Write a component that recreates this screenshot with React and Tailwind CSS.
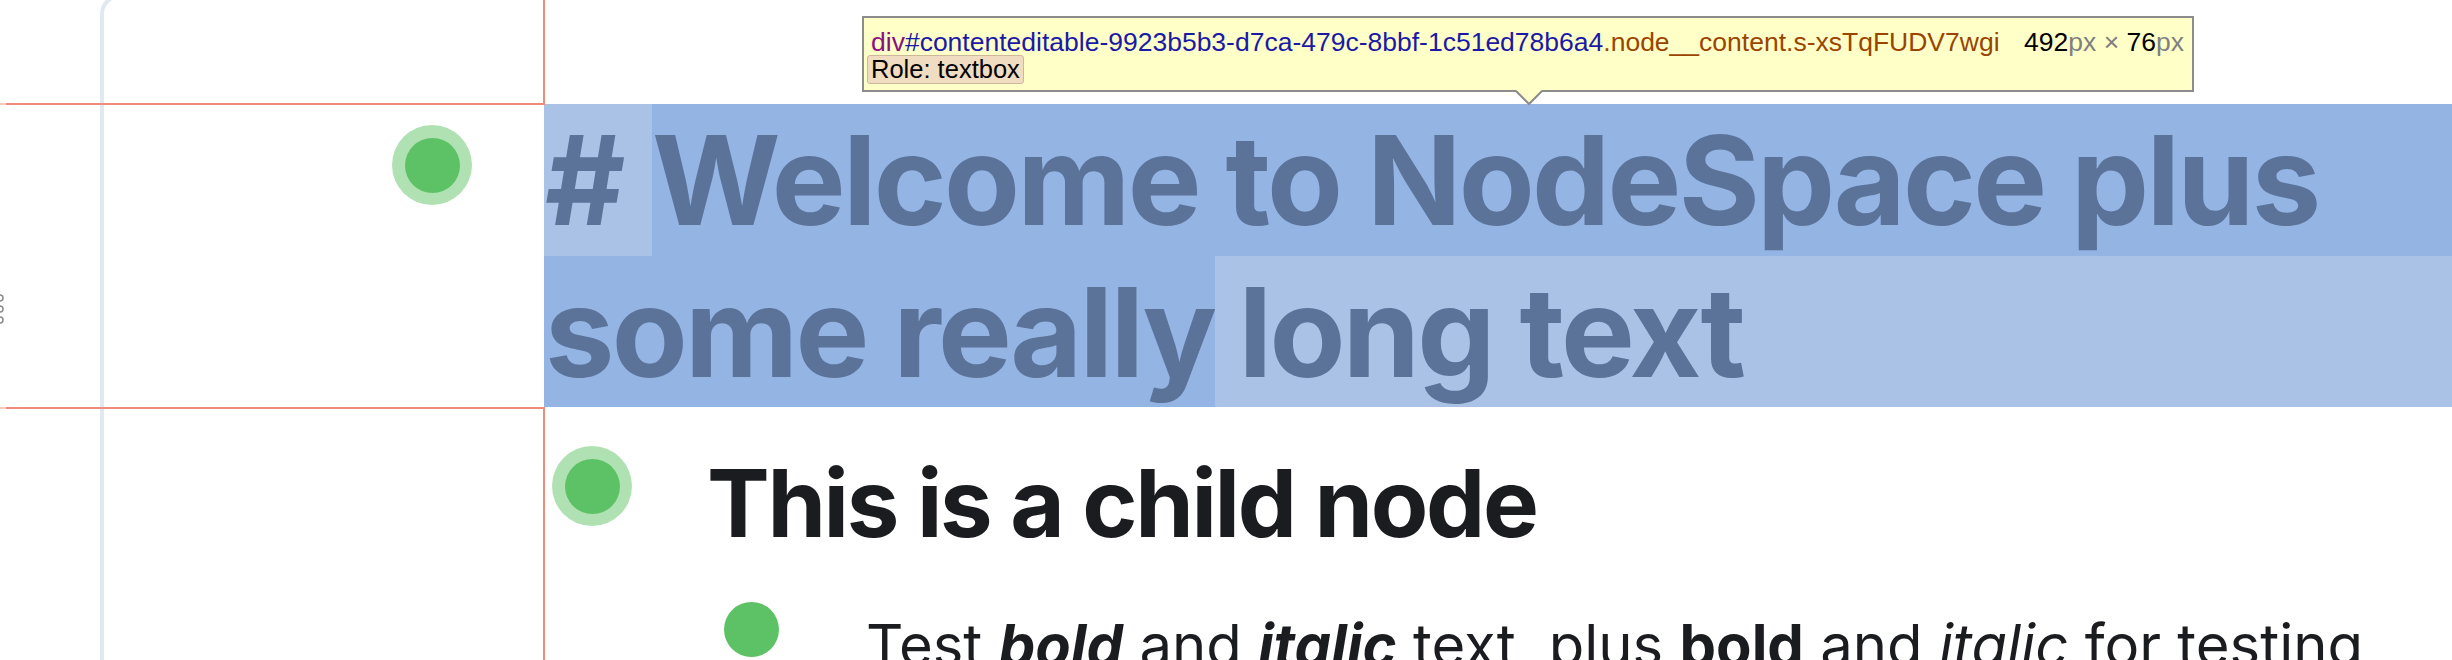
export default function App() {
  return (
    <div className="relative w-[2452px] h-[660px] overflow-hidden bg-white font-['Inter',sans-serif]">
      {/* gutter panel border */}
      <div className="absolute left-[100px] top-[-6px] w-[600px] h-[800px] border-l-4 border-t-4 border-[#e2e8f0] rounded-tl-[20px]" />
      {/* drag handle dots */}
      <svg className="absolute left-[-4px] top-[292px]" width="10" height="34" viewBox="0 0 10 34">
        <circle cx="4" cy="6" r="3" fill="none" stroke="#8a8a8a" strokeWidth="1.5" />
        <circle cx="4" cy="17" r="3" fill="none" stroke="#8a8a8a" strokeWidth="1.5" />
        <circle cx="4" cy="28" r="3" fill="none" stroke="#8a8a8a" strokeWidth="1.5" />
      </svg>

      {/* content */}
      <div className="pt-[104px]">
        {/* heading node */}
        <div className="flex items-start pl-[392px]">
          <div className="mt-[21px] w-[80px] h-[80px] shrink-0 rounded-full bg-[#b0e1b3] flex items-center justify-center">
            <div className="w-[55px] h-[55px] rounded-full bg-[#5dc266]" />
          </div>
          <div className="ml-[72px] w-[1968px] shrink-0 bg-[#94b4e4] text-[#5b7399] font-bold text-[124px] leading-[152px] tracking-[-0.022em] whitespace-nowrap">
            <div className="flex h-[152px]">
              <span className="w-[108px] shrink-0 bg-[#aac2e6] pl-[1px]">#</span>
              <span>Welcome to NodeSpace plus</span>
            </div>
            <div className="flex h-[151px]">
              <span className="pl-[1px]">some really</span>
              <span className="flex-1 bg-[#aac2e6] pl-[24px]">long text</span>
            </div>
          </div>
        </div>

        {/* child node */}
        <div className="flex items-start pl-[552px]">
          <div className="mt-[39px] w-[80px] h-[80px] shrink-0 rounded-full bg-[#b0e1b3] flex items-center justify-center">
            <div className="w-[55px] h-[55px] rounded-full bg-[#5dc266]" />
          </div>
          <div className="ml-[75px] mt-[38px] text-[#1b1c20] font-bold text-[94px] leading-[116px] tracking-[-0.025em] whitespace-nowrap">
            This is a child node
          </div>
        </div>

        {/* grandchild node */}
        <div className="flex items-start pl-[724px]">
          <div className="mt-[41px] w-[55px] h-[55px] shrink-0 rounded-full bg-[#5dc266]" />
          <div className="ml-[87px] mt-[49px] text-[#1b1c20] text-[58px] leading-[70px] whitespace-nowrap">
            Test <b className="italic">bold</b> and <b className="italic">italic</b> text, plus <b>bold</b> and <i>italic</i> for testing
          </div>
        </div>
      </div>

      {/* inspector guide lines */}
      <div className="absolute left-[0px] top-[103px] w-[6px] h-[2px] bg-[#f9c9c0]" />
      <div className="absolute left-[6px] top-[103px] w-[538px] h-[2px] bg-[#f08a7a]" />
      <div className="absolute left-[543px] top-[0px] w-[2px] h-[105px] bg-[#f08a7a]" />
      <div className="absolute left-[0px] top-[407px] w-[6px] h-[2px] bg-[#f9c9c0]" />
      <div className="absolute left-[6px] top-[407px] w-[538px] h-[2px] bg-[#f08a7a]" />
      <div className="absolute left-[543px] top-[407px] w-[2px] h-[260px] bg-[#f08a7a]" />

      {/* inspector tooltip */}
      <div className="absolute left-[862px] top-[16px] w-[1332px] h-[76px] bg-[#ffffc8] border-2 border-[#8c8c8c] font-['Liberation_Sans',Arial,sans-serif]">
        <div className="flex items-center justify-between pl-[7px] pr-[8px] pt-[12px] text-[26.5px] leading-[25px]">
          <div className="whitespace-nowrap">
            <span className="text-[#881280]">div</span>
            <span className="text-[#1a1aa6]">#contenteditable-9923b5b3-d7ca-479c-8bbf-1c51ed78b6a4</span>
            <span className="text-[#994500]">.node__content.s-xsTqFUDV7wgi</span>
          </div>
          <div className="whitespace-nowrap">
            <span className="text-black">492</span><span className="text-[#808080]">px × </span><span className="text-black">76</span><span className="text-[#808080]">px</span>
          </div>
        </div>
        <div className="pl-[3px]">
          <span className="inline-block bg-[#f0dcc0] border border-[#cdb89c] rounded-[3px] px-[3px] text-[25.5px] leading-[27px] text-black">Role: textbox</span>
        </div>
        <svg className="absolute left-[651px] top-[72px]" width="28" height="16" viewBox="0 0 28 16">
          <polygon points="1,0 14,14 27,0" fill="#ffffc8" />
          <polyline points="1,1 14,14 27,1" fill="none" stroke="#8c8c8c" strokeWidth="2" />
        </svg>
      </div>
    </div>
  );
}
